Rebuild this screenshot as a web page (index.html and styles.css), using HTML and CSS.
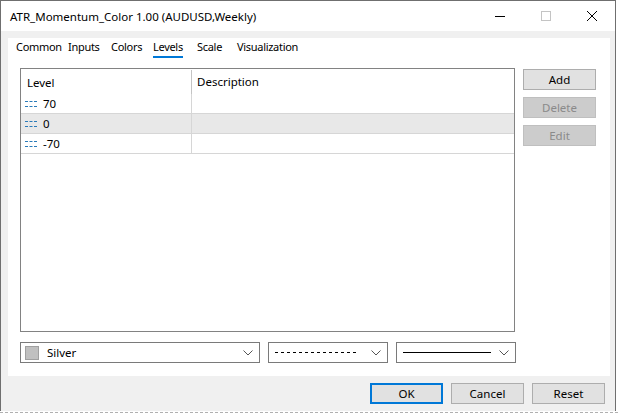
FILE: index.html
```html
<!DOCTYPE html>
<html lang="en">
<head>
    <meta charset="UTF-8">
    <title>ATR_Momentum_Color 1.00 (AUDUSD,Weekly)</title>
    <link rel="stylesheet" href="styles.css">
</head>
<body>
    <div class="window">
        <div class="titlebar">
            <span class="title">ATR_Momentum_Color 1.00 (AUDUSD,Weekly)</span>
            <div class="controls">
                <svg class="ctl" width="46" height="30" viewBox="0 0 46 30"><path d="M18 15.5h10" stroke="#000" stroke-width="1"/></svg>
                <svg class="ctl" width="46" height="30" viewBox="0 0 46 30"><rect x="18.5" y="10.5" width="9" height="9" fill="none" stroke="#c4c4c4"/></svg>
                <svg class="ctl" width="46" height="30" viewBox="0 0 46 30"><path d="M18 10l10 10M28 10l-10 10" stroke="#000" stroke-width="1"/></svg>
            </div>
        </div>

        <div class="panel">
            <div class="tabs">
                <span class="tab tab-common"><span class="tab-label">Common</span></span>
                <span class="tab tab-inputs"><span class="tab-label">Inputs</span></span>
                <span class="tab tab-colors"><span class="tab-label">Colors</span></span>
                <span class="tab tab-levels active"><span class="tab-label">Levels</span></span>
                <span class="tab tab-scale"><span class="tab-label">Scale</span></span>
                <span class="tab"><span class="tab-label">Visualization</span></span>
            </div>

            <div class="panel-body">
                <div class="list">
                    <div class="list-head">
                        <div class="col-level">Level</div>
                        <div class="col-desc">Description</div>
                    </div>
                    <div class="row">
                        <div class="col-level"><span class="dots"></span>70</div>
                        <div class="col-desc"></div>
                    </div>
                    <div class="row selected">
                        <div class="col-level"><span class="dots"></span>0</div>
                        <div class="col-desc"></div>
                    </div>
                    <div class="row">
                        <div class="col-level"><span class="dots"></span>-70</div>
                        <div class="col-desc"></div>
                    </div>
                </div>

                <div class="side-buttons">
                    <button class="btn">Add</button>
                    <button class="btn" disabled>Delete</button>
                    <button class="btn" disabled>Edit</button>
                </div>

                <div class="selects">
                    <div class="select color-select">
                        <span class="swatch"></span>
                        <span class="select-text">Silver</span>
                        <svg class="chev" width="10" height="6" viewBox="0 0 10 6"><path d="M0.5 0.5l4.5 4.5 4.5-4.5" fill="none" stroke="#555"/></svg>
                    </div>
                    <div class="select style-select">
                        <span class="line dashed"></span>
                        <svg class="chev" width="10" height="6" viewBox="0 0 10 6"><path d="M0.5 0.5l4.5 4.5 4.5-4.5" fill="none" stroke="#555"/></svg>
                    </div>
                    <div class="select style-select">
                        <span class="line solid"></span>
                        <svg class="chev" width="10" height="6" viewBox="0 0 10 6"><path d="M0.5 0.5l4.5 4.5 4.5-4.5" fill="none" stroke="#555"/></svg>
                    </div>
                </div>
            </div>
        </div>

        <div class="footer">
            <button class="btn default">OK</button>
            <button class="btn">Cancel</button>
            <button class="btn">Reset</button>
        </div>
    </div>
    <div class="chart-strip"></div>
</body>
</html>
```

FILE: styles.css
```css
html, body {
    margin: 0;
    padding: 0;
}
body {
    width: 618px;
    height: 415px;
    overflow: hidden;
    background-color: #ffffff;
    font-family: "Noto Sans", "Liberation Sans", sans-serif;
    font-size: 11.5px;
    color: #000;
}
.window {
    width: 616px;
    height: 411px;
    box-sizing: border-box;
    border: 1px solid #6f6f6f;
    border-bottom: none;
    background-color: #f0f0f0;
    display: flex;
    flex-direction: column;
}
.titlebar {
    height: 30px;
    background-color: #fff;
    display: flex;
    align-items: center;
    justify-content: space-between;
}
.title {
    padding-left: 9px;
    font-size: 11.5px;
}
.controls {
    display: flex;
}
.ctl {
    display: block;
}
.panel {
    margin: 7px 5px 0 7px;
    height: 338px;
    background-color: #fff;
    display: flex;
    flex-direction: column;
}
.tabs {
    display: flex;
    padding-left: 8px;
    height: 20px;
    font-size: 11px;
    letter-spacing: -0.3px;
}
.tab {
    height: 20px;
    flex: none;
}
.tab-common { width: 52px; }
.tab-inputs { width: 43px; }
.tab-colors { width: 42px; }
.tab-levels { width: 44px; }
.tab-scale { width: 40px; }
.tab-label {
    display: inline-block;
    line-height: 18px;
    height: 20px;
    box-sizing: border-box;
    white-space: nowrap;
}
.tab.active .tab-label {
    border-bottom: 2px solid #0078d7;
}
.panel-body {
    display: grid;
    grid-template-columns: 495px 73px;
    grid-template-rows: 264px 21px;
    column-gap: 8px;
    row-gap: 10px;
    margin: 10px 0 0 12px;
}
.list {
    border: 1px solid #828282;
    box-sizing: border-box;
    background: #fff;
}
.list-head, .row {
    display: flex;
}
.list-head {
    height: 25px;
    align-items: center;
}
.col-level {
    width: 171px;
    box-sizing: border-box;
    padding-left: 6px;
    border-right: 1px solid #d6d6d6;
    display: flex;
    align-items: center;
    height: 100%;
}
.col-desc {
    flex: 1;
    padding-left: 5px;
    display: flex;
    align-items: center;
    height: 100%;
}
.list-head .col-level {
    border-right-color: #c4c4c4;
    height: 24px;
    margin-top: 1px;
}
.row {
    height: 20px;
    box-sizing: border-box;
    border-bottom: 1px solid #d6d6d6;
}
.row.selected {
    background-color: #e8e8e8;
}
.row .col-level {
    padding-left: 4px;
}
.dots {
    width: 12px;
    height: 4px;
    margin-right: 6px;
    border-top: 1px dashed #2a7ab8;
    border-bottom: 1px dashed #2a7ab8;
}
.side-buttons {
    display: flex;
    flex-direction: column;
    gap: 7px;
    padding-top: 1px;
}
.btn {
    font-family: inherit;
    font-size: 11.5px;
    height: 21px;
    width: 73px;
    padding: 0;
    background-color: #e1e1e1;
    border: 1px solid #adadad;
    color: #000;
}
.btn:disabled {
    background-color: #cccccc;
    border-color: #bfbfbf;
    color: #8a8a8a;
}
.btn.default {
    border: 2px solid #0078d7;
}
.selects {
    grid-column: 1 / 3;
    display: flex;
    gap: 8px;
}
.select {
    height: 21px;
    box-sizing: border-box;
    border: 1px solid #7a7a7a;
    background: #fff;
    display: flex;
    align-items: center;
    padding: 0 6px 0 4px;
}
.color-select {
    width: 240px;
}
.style-select {
    width: 120px;
    padding-left: 6px;
}
.swatch {
    width: 12px;
    height: 12px;
    background-color: #c0c0c0;
    border: 1px solid #a0a0a0;
    margin-right: 8px;
}
.select-text {
    flex: 1;
}
.line {
    flex: 1;
    margin-right: 14px;
    height: 1px;
}
.line.dashed {
    background: repeating-linear-gradient(90deg, #000 0 3px, transparent 3px 6px);
}
.line.solid {
    background-color: #000;
    margin-right: 8px;
}
.chev {
    display: block;
}
.footer {
    display: flex;
    justify-content: flex-end;
    gap: 8px;
    margin: 7px 10px 0 0;
}
.chart-strip {
    height: 4px;
    border-top: 1px dashed #b0b0b0;
    margin-top: 1px;
}
```
